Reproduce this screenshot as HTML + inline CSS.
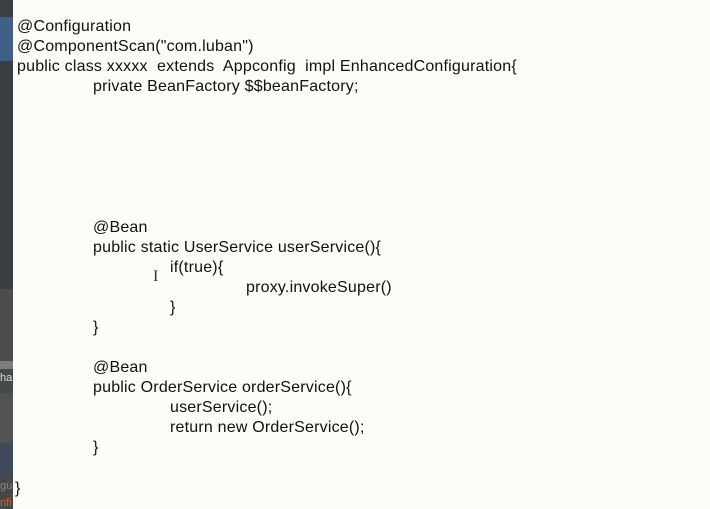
<!DOCTYPE html>
<html><head><meta charset="utf-8"><style>
html,body{margin:0;padding:0;width:710px;height:509px;overflow:hidden;background:#fbfcf8;}
.side{position:absolute;left:0;top:0;width:13px;height:509px;background:#3c3f41;}
.side div{position:absolute;left:0;width:13px;}
.code{position:absolute;left:0;top:0;font-family:"Liberation Sans",sans-serif;font-size:16px;color:#111;letter-spacing:0.2px;}
.l{position:absolute;white-space:pre;line-height:20px;}
</style></head><body>
<div class="side">
<div style="top:17px;height:44px;background:#3e5f8a"></div>
<div style="top:61px;height:228px;background:#3a3d3f"></div>
<div style="top:289px;height:72px;background:#4a4c4e"></div>
<div style="top:361px;height:8px;background:#7a7c7e"></div>
<div style="top:369px;height:24px;background:#46494b"></div>
<div style="top:393px;height:50px;background:#505254"></div>
<div style="top:443px;height:30px;background:#3e4a5a"></div>
<div style="top:473px;height:36px;background:#45474a"></div>
</div>
<div style="position:absolute;left:0;top:372px;font:11px 'Liberation Sans',sans-serif;color:#ddd;">ha</div>
<div style="position:absolute;left:0;top:480px;font:11px 'Liberation Sans',sans-serif;color:#888;">gu</div>
<div style="position:absolute;left:0;top:497px;font:11px 'Liberation Sans',sans-serif;color:#d9622b;">nfi</div>
<div class="code">
<div class="l" style="left:17px;top:17px">@Configuration</div>
<div class="l" style="left:17px;top:37px">@ComponentScan("com.luban")</div>
<div class="l" style="left:17px;top:57px">public class xxxxx  extends  Appconfig  impl EnhancedConfiguration{</div>
<div class="l" style="left:93px;top:77px">private BeanFactory $$beanFactory;</div>
<div class="l" style="left:93px;top:218px">@Bean</div>
<div class="l" style="left:93px;top:238px">public static UserService userService(){</div>
<div class="l" style="left:170px;top:258px">if(true){</div>
<div class="l" style="left:246px;top:278px">proxy.invokeSuper()</div>
<div class="l" style="left:170px;top:298px">}</div>
<div class="l" style="left:93px;top:318px">}</div>
<div class="l" style="left:93px;top:358px">@Bean</div>
<div class="l" style="left:93px;top:378px">public OrderService orderService(){</div>
<div class="l" style="left:170px;top:398px">userService();</div>
<div class="l" style="left:170px;top:418px">return new OrderService();</div>
<div class="l" style="left:93px;top:438px">}</div>
<div class="l" style="left:15px;top:479px">}</div>
<div class="l" style="left:153px;top:267px;font-size:16px;font-family:'Liberation Serif',serif;color:#333">I</div>
</div>
</body></html>
